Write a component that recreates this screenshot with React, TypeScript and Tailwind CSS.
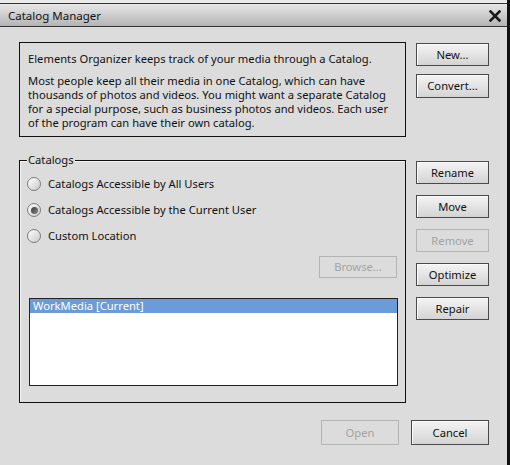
import React from 'react';

const font = { fontFamily: '"Noto Sans", "Open Sans", Arial, sans-serif' };

type BtnProps = { label: string; disabled?: boolean; className?: string };

const Btn: React.FC<BtnProps> = ({ label, disabled, className = '' }) => (
  <button
    disabled={disabled}
    className={`flex items-center justify-center text-[11.2px] leading-none ${
      disabled
        ? 'border border-[#b3b3b3] bg-[#dcdcdc] text-[#a3a3a3]'
        : 'border border-[#4a4a4a] bg-gradient-to-b from-[#f4f4f4] to-[#d4d4d4] text-[#111] shadow-[inset_1px_1px_0_#fafafa]'
    } ${className}`}
  >
    {label}
  </button>
);

const Radio: React.FC<{ label: string; checked?: boolean }> = ({ label, checked }) => (
  <div className="flex h-[26px] items-center">
    <span className="ml-[7px] flex h-[14px] w-[14px] items-center justify-center rounded-full border border-[#7c7c7c] bg-gradient-to-br from-[#ffffff] to-[#c9c9c9]">
      {checked && (
        <span className="h-[7px] w-[7px] rounded-full bg-gradient-to-br from-[#3a3a3a] to-[#8a8a8a]" />
      )}
    </span>
    <span className="ml-[7px] text-[11.2px] text-[#111]">{label}</span>
  </div>
);

export default function App() {
  return (
    <div style={font} className="flex h-[465px] w-[510px] flex-col border-r-[3px] border-[#111] bg-[#dcdcdc]">
      <div className="h-[3px] bg-[#ececec]" />
      <div className="flex h-[24px] items-center justify-between border-y border-[#333] bg-gradient-to-b from-[#e8e8e8] to-[#b4b4b4] pl-[8px] pr-[6px]">
        <span className="mt-[1px] text-[11.5px] text-[#111]">Catalog Manager</span>
        <svg width="12" height="12" viewBox="0 0 12 12" className="mt-[1px]">
          <path d="M1.5 1.5 L10.5 10.5 M10.5 1.5 L1.5 10.5" stroke="#1a1a1a" strokeWidth="2.6" strokeLinecap="square" />
        </svg>
      </div>

      <div className="flex flex-col pl-[19px] pt-[15px]">
        <div className="flex items-start gap-[10px]">
          <div className="flex h-[95px] w-[387px] flex-col gap-[8px] border border-[#111] px-[8px] pt-[9px] text-[11.2px] leading-[14px] text-[#111]">
            <p>Elements Organizer keeps track of your media through a Catalog.</p>
            <p>
              Most people keep all their media in one Catalog, which can have thousands of photos and videos. You
              might want a separate Catalog for a special purpose, such as business photos and videos. Each user of
              the program can have their own catalog.
            </p>
          </div>
          <div className="mt-[1px] flex flex-col gap-[8px]">
            <Btn label="New..." className="h-[23px] w-[73px]" />
            <Btn label="Convert..." className="h-[24px] w-[73px]" />
          </div>
        </div>

        <div className="mt-[23px] flex items-start gap-[10px]">
          <div className="relative flex h-[243px] w-[387px] flex-col border border-[#111] shadow-[inset_1px_1px_0_#f3f3f3]">
            <span className="absolute left-[7px] top-[-8px] bg-[#dcdcdc] px-[1px] text-[11.2px] leading-[14px] text-[#111]">
              Catalogs
            </span>
            <div className="flex flex-col pt-[10px]">
              <Radio label="Catalogs Accessible by All Users" />
              <Radio label="Catalogs Accessible by the Current User" checked />
              <Radio label="Custom Location" />
            </div>
            <div className="mt-[7px] flex justify-end pr-[8px]">
              <Btn label="Browse..." disabled className="h-[22px] w-[78px]" />
            </div>
            <div className="ml-[9px] mt-[20px] h-[88px] w-[369px] border border-[#222] bg-white">
              <div className="flex h-[14px] items-center bg-[#6b9bd8] pl-[3px] text-[11.2px] leading-none text-white">
                WorkMedia [Current]
              </div>
            </div>
          </div>
          <div className="mt-[1px] flex flex-col gap-[11px]">
            <Btn label="Rename" className="h-[23px] w-[73px]" />
            <Btn label="Move" className="h-[23px] w-[73px]" />
            <Btn label="Remove" disabled className="h-[23px] w-[73px]" />
            <Btn label="Optimize" className="h-[23px] w-[73px]" />
            <Btn label="Repair" className="h-[23px] w-[73px]" />
          </div>
        </div>

        <div className="mt-[17px] flex w-[470px] justify-end gap-[12px]">
          <Btn label="Open" disabled className="h-[25px] w-[78px]" />
          <Btn label="Cancel" className="h-[25px] w-[78px]" />
        </div>
      </div>
    </div>
  );
}
